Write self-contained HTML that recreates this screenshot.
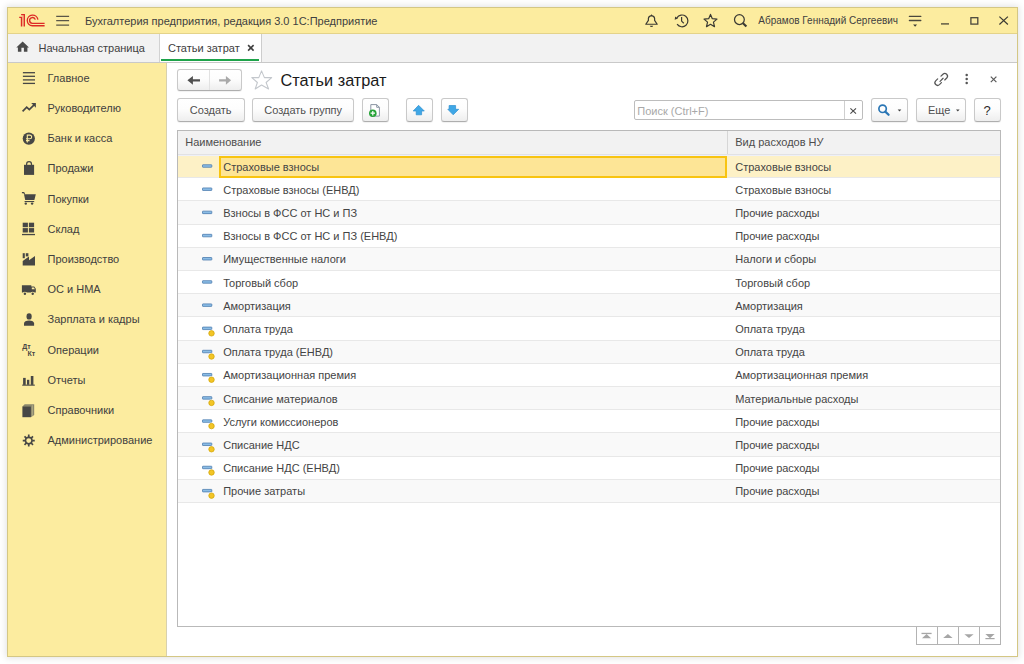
<!DOCTYPE html>
<html><head><meta charset="utf-8">
<style>
*{box-sizing:border-box;margin:0;padding:0}
html,body{width:1024px;height:664px;overflow:hidden;background:#fff;font-family:"Liberation Sans",sans-serif;font-size:11px;color:#404040;position:relative}
.a{position:absolute}
.t{position:absolute;white-space:pre;line-height:1}
.btn{position:absolute;border:1px solid #c9c9c9;border-bottom-color:#aeaeae;border-radius:3px;background:linear-gradient(#ffffff,#fdfdfd 45%,#eeeeee);box-shadow:0 1px 1px rgba(0,0,0,0.06)}
svg{position:absolute;left:0;top:0}
</style></head><body>
<div class="a" style="left:7px;top:7px;width:1011px;height:650px;border:1px solid #d4c784;background:#fff;box-shadow:0 0 7px 1px rgba(0,0,0,0.12)"></div>
<div class="a" style="left:8px;top:8px;width:1009px;height:26px;background:#fcec9f;border-bottom:1px solid #e4d38a"></div>
<div class="t" style="left:85px;top:16.10px;font-size:11px;color:#404040;transform:scaleY(1.05);transform-origin:0 9.30px;">Бухгалтерия предприятия, редакция 3.0 1С:Предприятие</div>
<div class="t" style="left:758.3px;top:16.04px;font-size:10px;color:#404040;transform:scaleY(1.05);transform-origin:0 8.46px;">Абрамов Геннадий Сергеевич</div>
<div class="a" style="left:8px;top:34px;width:1009px;height:29px;background:#f2f2f2;border-bottom:1px solid #c9c9c9"></div>
<div class="a" style="left:159px;top:34px;width:1px;height:28px;background:#d2d2d2"></div>
<div class="a" style="left:160px;top:34px;width:102px;height:28px;background:#fff;border-right:1px solid #cdcdcd"></div>
<div class="a" style="left:161px;top:59px;width:98px;height:2px;background:#1ea34a"></div>
<div class="t" style="left:38.5px;top:42.70px;font-size:11px;color:#404040;transform:scaleY(1.05);transform-origin:0 9.30px;">Начальная страница</div>
<div class="t" style="left:168px;top:42.70px;font-size:11px;color:#404040;transform:scaleY(1.05);transform-origin:0 9.30px;">Статьи затрат</div>
<div class="a" style="left:8px;top:63px;width:159px;height:593px;background:#fcec9f;border-right:1px solid #d8d1ae"></div>
<div class="t" style="left:47.5px;top:72.80px;font-size:11px;color:#404040;transform:scaleY(1.05);transform-origin:0 9.30px;">Главное</div>
<div class="t" style="left:47.5px;top:103.00px;font-size:11px;color:#404040;transform:scaleY(1.05);transform-origin:0 9.30px;">Руководителю</div>
<div class="t" style="left:47.5px;top:133.20px;font-size:11px;color:#404040;transform:scaleY(1.05);transform-origin:0 9.30px;">Банк и касса</div>
<div class="t" style="left:47.5px;top:163.40px;font-size:11px;color:#404040;transform:scaleY(1.05);transform-origin:0 9.30px;">Продажи</div>
<div class="t" style="left:47.5px;top:193.60px;font-size:11px;color:#404040;transform:scaleY(1.05);transform-origin:0 9.30px;">Покупки</div>
<div class="t" style="left:47.5px;top:223.80px;font-size:11px;color:#404040;transform:scaleY(1.05);transform-origin:0 9.30px;">Склад</div>
<div class="t" style="left:47.5px;top:254.00px;font-size:11px;color:#404040;transform:scaleY(1.05);transform-origin:0 9.30px;">Производство</div>
<div class="t" style="left:47.5px;top:284.20px;font-size:11px;color:#404040;transform:scaleY(1.05);transform-origin:0 9.30px;">ОС и НМА</div>
<div class="t" style="left:47.5px;top:314.40px;font-size:11px;color:#404040;transform:scaleY(1.05);transform-origin:0 9.30px;">Зарплата и кадры</div>
<div class="t" style="left:47.5px;top:344.60px;font-size:11px;color:#404040;transform:scaleY(1.05);transform-origin:0 9.30px;">Операции</div>
<div class="t" style="left:47.5px;top:374.80px;font-size:11px;color:#404040;transform:scaleY(1.05);transform-origin:0 9.30px;">Отчеты</div>
<div class="t" style="left:47.5px;top:405.00px;font-size:11px;color:#404040;transform:scaleY(1.05);transform-origin:0 9.30px;">Справочники</div>
<div class="t" style="left:47.5px;top:435.20px;font-size:11px;color:#404040;transform:scaleY(1.05);transform-origin:0 9.30px;">Администрирование</div>
<div class="btn" style="left:177px;top:69px;width:65px;height:22px"></div>
<div class="a" style="left:209px;top:70px;width:1px;height:20px;background:#e2e2e2"></div>
<div class="t" style="left:280.4px;top:72.31px;font-size:16.3px;color:#1a1a1a;">Статьи затрат</div>
<div class="btn" style="left:177px;top:98px;width:68px;height:24px"></div>
<div class="t" style="left:189.8px;top:105.20px;font-size:11px;color:#505050;transform:scaleY(1.05);transform-origin:0 9.30px;">Создать</div>
<div class="btn" style="left:252px;top:98px;width:102px;height:24px"></div>
<div class="t" style="left:264.3px;top:105.20px;font-size:11px;color:#505050;transform:scaleY(1.05);transform-origin:0 9.30px;">Создать группу</div>
<div class="btn" style="left:362px;top:98px;width:27px;height:24px"></div>
<div class="btn" style="left:406px;top:98px;width:27px;height:24px"></div>
<div class="btn" style="left:441px;top:98px;width:27px;height:24px"></div>
<div class="a" style="left:634px;top:100px;width:229px;height:20px;border:1px solid #bdbdbd;border-radius:2px;background:#fff"></div>
<div class="a" style="left:844px;top:101px;width:1px;height:18px;background:#cfcfcf"></div>
<div class="t" style="left:637.3px;top:105.90px;font-size:11px;color:#a8a8a8;transform:scaleY(1.05);transform-origin:0 9.30px;">Поиск (Ctrl+F)</div>
<div class="btn" style="left:871px;top:98px;width:37px;height:24px"></div>
<div class="btn" style="left:916px;top:98px;width:50px;height:24px"></div>
<div class="t" style="left:928px;top:105.20px;font-size:11px;color:#505050;transform:scaleY(1.05);transform-origin:0 9.30px;">Еще</div>
<div class="btn" style="left:974px;top:98px;width:27px;height:24px"></div>
<div class="t" style="left:983.6px;top:104.00px;font-size:13px;color:#2a2a2a;">?</div>
<div class="a" style="left:177px;top:130px;width:824px;height:497px;border:1px solid #b9b9b9;background:#fff"></div>
<div class="a" style="left:178px;top:131px;width:822px;height:24px;background:#f2f2f2;border-bottom:1px solid #e2e2e4"></div>
<div class="a" style="left:178px;top:155px;width:822px;height:1px;background:#eef0f8"></div>
<div class="a" style="left:727px;top:131px;width:1px;height:23px;background:#d6d6d6"></div>
<div class="t" style="left:185.2px;top:137.00px;font-size:11px;color:#4d4d4d;transform:scaleY(1.05);transform-origin:0 9.30px;">Наименование</div>
<div class="t" style="left:735.2px;top:137.00px;font-size:11px;color:#4d4d4d;transform:scaleY(1.05);transform-origin:0 9.30px;">Вид расходов НУ</div>
<div class="a" style="left:178px;top:156px;width:822px;height:21px;background:#fdf1c6"></div>
<div class="a" style="left:178px;top:177px;width:822px;height:1px;background:#e8e8e8"></div>
<div class="a" style="left:219px;top:156px;width:508px;height:22px;border:2px solid #f8c411;background:#fde596"></div>
<div class="t" style="left:223.2px;top:161.60px;font-size:11px;color:#444;transform:scaleY(1.05);transform-origin:0 9.30px;">Страховые взносы</div>
<div class="t" style="left:735.2px;top:161.60px;font-size:11px;color:#444;transform:scaleY(1.05);transform-origin:0 9.30px;">Страховые взносы</div>
<div class="a" style="left:178px;top:178px;width:822px;height:22px;background:#fff"></div>
<div class="a" style="left:178px;top:200px;width:822px;height:1px;background:#e8e8e8"></div>
<div class="t" style="left:223.2px;top:184.79px;font-size:11px;color:#444;transform:scaleY(1.05);transform-origin:0 9.30px;">Страховые взносы (ЕНВД)</div>
<div class="t" style="left:735.2px;top:184.79px;font-size:11px;color:#444;transform:scaleY(1.05);transform-origin:0 9.30px;">Страховые взносы</div>
<div class="a" style="left:178px;top:201px;width:822px;height:23px;background:#f9f9f9"></div>
<div class="a" style="left:178px;top:224px;width:822px;height:1px;background:#e8e8e8"></div>
<div class="t" style="left:223.2px;top:207.98px;font-size:11px;color:#444;transform:scaleY(1.05);transform-origin:0 9.30px;">Взносы в ФСС от НС и ПЗ</div>
<div class="t" style="left:735.2px;top:207.98px;font-size:11px;color:#444;transform:scaleY(1.05);transform-origin:0 9.30px;">Прочие расходы</div>
<div class="a" style="left:178px;top:225px;width:822px;height:22px;background:#fff"></div>
<div class="a" style="left:178px;top:247px;width:822px;height:1px;background:#e8e8e8"></div>
<div class="t" style="left:223.2px;top:231.17px;font-size:11px;color:#444;transform:scaleY(1.05);transform-origin:0 9.30px;">Взносы в ФСС от НС и ПЗ (ЕНВД)</div>
<div class="t" style="left:735.2px;top:231.17px;font-size:11px;color:#444;transform:scaleY(1.05);transform-origin:0 9.30px;">Прочие расходы</div>
<div class="a" style="left:178px;top:248px;width:822px;height:22px;background:#f9f9f9"></div>
<div class="a" style="left:178px;top:270px;width:822px;height:1px;background:#e8e8e8"></div>
<div class="t" style="left:223.2px;top:254.36px;font-size:11px;color:#444;transform:scaleY(1.05);transform-origin:0 9.30px;">Имущественные налоги</div>
<div class="t" style="left:735.2px;top:254.36px;font-size:11px;color:#444;transform:scaleY(1.05);transform-origin:0 9.30px;">Налоги и сборы</div>
<div class="a" style="left:178px;top:271px;width:822px;height:22px;background:#fff"></div>
<div class="a" style="left:178px;top:293px;width:822px;height:1px;background:#e8e8e8"></div>
<div class="t" style="left:223.2px;top:277.55px;font-size:11px;color:#444;transform:scaleY(1.05);transform-origin:0 9.30px;">Торговый сбор</div>
<div class="t" style="left:735.2px;top:277.55px;font-size:11px;color:#444;transform:scaleY(1.05);transform-origin:0 9.30px;">Торговый сбор</div>
<div class="a" style="left:178px;top:294px;width:822px;height:22px;background:#f9f9f9"></div>
<div class="a" style="left:178px;top:316px;width:822px;height:1px;background:#e8e8e8"></div>
<div class="t" style="left:223.2px;top:300.74px;font-size:11px;color:#444;transform:scaleY(1.05);transform-origin:0 9.30px;">Амортизация</div>
<div class="t" style="left:735.2px;top:300.74px;font-size:11px;color:#444;transform:scaleY(1.05);transform-origin:0 9.30px;">Амортизация</div>
<div class="a" style="left:178px;top:317px;width:822px;height:23px;background:#fff"></div>
<div class="a" style="left:178px;top:340px;width:822px;height:1px;background:#e8e8e8"></div>
<div class="t" style="left:223.2px;top:323.93px;font-size:11px;color:#444;transform:scaleY(1.05);transform-origin:0 9.30px;">Оплата труда</div>
<div class="t" style="left:735.2px;top:323.93px;font-size:11px;color:#444;transform:scaleY(1.05);transform-origin:0 9.30px;">Оплата труда</div>
<div class="a" style="left:178px;top:341px;width:822px;height:22px;background:#f9f9f9"></div>
<div class="a" style="left:178px;top:363px;width:822px;height:1px;background:#e8e8e8"></div>
<div class="t" style="left:223.2px;top:347.12px;font-size:11px;color:#444;transform:scaleY(1.05);transform-origin:0 9.30px;">Оплата труда (ЕНВД)</div>
<div class="t" style="left:735.2px;top:347.12px;font-size:11px;color:#444;transform:scaleY(1.05);transform-origin:0 9.30px;">Оплата труда</div>
<div class="a" style="left:178px;top:364px;width:822px;height:22px;background:#fff"></div>
<div class="a" style="left:178px;top:386px;width:822px;height:1px;background:#e8e8e8"></div>
<div class="t" style="left:223.2px;top:370.31px;font-size:11px;color:#444;transform:scaleY(1.05);transform-origin:0 9.30px;">Амортизационная премия</div>
<div class="t" style="left:735.2px;top:370.31px;font-size:11px;color:#444;transform:scaleY(1.05);transform-origin:0 9.30px;">Амортизационная премия</div>
<div class="a" style="left:178px;top:387px;width:822px;height:22px;background:#f9f9f9"></div>
<div class="a" style="left:178px;top:409px;width:822px;height:1px;background:#e8e8e8"></div>
<div class="t" style="left:223.2px;top:393.50px;font-size:11px;color:#444;transform:scaleY(1.05);transform-origin:0 9.30px;">Списание материалов</div>
<div class="t" style="left:735.2px;top:393.50px;font-size:11px;color:#444;transform:scaleY(1.05);transform-origin:0 9.30px;">Материальные расходы</div>
<div class="a" style="left:178px;top:410px;width:822px;height:22px;background:#fff"></div>
<div class="a" style="left:178px;top:432px;width:822px;height:1px;background:#e8e8e8"></div>
<div class="t" style="left:223.2px;top:416.69px;font-size:11px;color:#444;transform:scaleY(1.05);transform-origin:0 9.30px;">Услуги комиссионеров</div>
<div class="t" style="left:735.2px;top:416.69px;font-size:11px;color:#444;transform:scaleY(1.05);transform-origin:0 9.30px;">Прочие расходы</div>
<div class="a" style="left:178px;top:433px;width:822px;height:23px;background:#f9f9f9"></div>
<div class="a" style="left:178px;top:456px;width:822px;height:1px;background:#e8e8e8"></div>
<div class="t" style="left:223.2px;top:439.88px;font-size:11px;color:#444;transform:scaleY(1.05);transform-origin:0 9.30px;">Списание НДС</div>
<div class="t" style="left:735.2px;top:439.88px;font-size:11px;color:#444;transform:scaleY(1.05);transform-origin:0 9.30px;">Прочие расходы</div>
<div class="a" style="left:178px;top:457px;width:822px;height:22px;background:#fff"></div>
<div class="a" style="left:178px;top:479px;width:822px;height:1px;background:#e8e8e8"></div>
<div class="t" style="left:223.2px;top:463.07px;font-size:11px;color:#444;transform:scaleY(1.05);transform-origin:0 9.30px;">Списание НДС (ЕНВД)</div>
<div class="t" style="left:735.2px;top:463.07px;font-size:11px;color:#444;transform:scaleY(1.05);transform-origin:0 9.30px;">Прочие расходы</div>
<div class="a" style="left:178px;top:480px;width:822px;height:22px;background:#f9f9f9"></div>
<div class="a" style="left:178px;top:502px;width:822px;height:1px;background:#e8e8e8"></div>
<div class="t" style="left:223.2px;top:486.26px;font-size:11px;color:#444;transform:scaleY(1.05);transform-origin:0 9.30px;">Прочие затраты</div>
<div class="t" style="left:735.2px;top:486.26px;font-size:11px;color:#444;transform:scaleY(1.05);transform-origin:0 9.30px;">Прочие расходы</div>
<div class="a" style="left:916px;top:627px;width:85px;height:18px;border:1px solid #b3b3b3;border-top:none;background:#fff"></div>
<div class="a" style="left:937px;top:627px;width:1px;height:17px;background:#b3b3b3"></div>
<div class="a" style="left:958px;top:627px;width:1px;height:17px;background:#b3b3b3"></div>
<div class="a" style="left:979px;top:627px;width:1px;height:17px;background:#b3b3b3"></div>
<svg width="1024" height="664" viewBox="0 0 1024 664">
<rect x="22.1" y="15.2" width="1.6" height="11.2" fill="#f0a07a" opacity="0.55"/>
<g fill="none" stroke="#dd2a26" stroke-width="1.35"><path d="M19.2 17.4H21.5V26.4M21.1 14.6H24.3V26.4"/><path d="M37.9 19.6A5.35 5.35 0 1 0 32.4 25.75H44.6"/><path d="M35.3 19.6A2.9 2.9 0 1 0 32.4 23.3H44.6"/></g>
<g stroke="#5a5648" stroke-width="1.3"><path d="M56.2 16.4H69.1M56.2 20.7H69.1M56.2 25.1H69.1"/></g>
<g fill="none" stroke="#3b3a33" stroke-width="1.2" stroke-linejoin="round"><path d="M645.8 24.25L648.4 20.3V18.3Q648.7 16.2 651.5 15.7Q654.3 16.2 654.6 18.3V20.3L657.2 24.25Z"/></g><path d="M650.6 15.9L651.5 14L652.4 15.9Z" fill="#3b3a33"/><path d="M649.8 25.7H653.2Q652.9 27.1 651.5 27.1Q650.1 27.1 649.8 25.7Z" fill="#3b3a33"/>
<g fill="none" stroke="#3b3a33" stroke-width="1.2"><path d="M676.9 17.9A5.9 5.9 0 1 1 677.1 24.2"/><path d="M681.6 17.1V21.1L683.8 23.2"/></g><path d="M674.7 19.7L675.2 16.6L678 18.4Z" fill="#3b3a33"/>
<polygon points="710.50,14.40 712.32,18.69 716.97,19.10 713.45,22.16 714.50,26.70 710.50,24.30 706.50,26.70 707.55,22.16 704.03,19.10 708.68,18.69" fill="none" stroke="#3b3a33" stroke-width="1.2" stroke-linejoin="round"/>
<circle cx="739.4" cy="19.6" r="4.9" fill="none" stroke="#3b3a33" stroke-width="1.25"/><path d="M743 23.2L746.4 26.6" stroke="#3b3a33" stroke-width="2.1"/>
<g stroke="#4a473c" stroke-width="1.3" stroke-linecap="round"><path d="M909.4 16.4H920.8M909.4 20.5H920.8"/></g><path d="M913.1 24.6H917.1L915.1 26.8Z" fill="#3b3a33"/>
<path d="M941 23.9H949" stroke="#55523f" stroke-width="1.4"/><rect x="970.9" y="17.7" width="6.9" height="6.4" fill="none" stroke="#4a473c" stroke-width="1.3"/><path d="M999.4 16.6L1007.9 24.5M1007.9 16.6L999.4 24.5" stroke="#3b3a33" stroke-width="1.2"/>
<path d="M16.3 47.5L22.65 41.6L29 47.5H27.4V51.8H23.9V47.8H21.4V51.8H17.9V47.5Z" fill="#4a4a4a"/>
<path d="M248.1 45.1L253.6 50.6M253.6 45.1L248.1 50.6" stroke="#404040" stroke-width="1.6"/>
<path d="M187.4 80.3L192.9 76V79.2H200V81.5H192.9V84.7Z" fill="#505050"/>
<path d="M231.1 80.3L225.9 76V79.2H219.1V81.5H225.9V84.7Z" fill="#a9a9a9"/>
<polygon points="261.55,70.9 264.4,77.6 271.7,77.6 266.1,82.5 268.6,89 261.55,85 255.2,89 257.4,82.5 251.8,77.6 258.8,77.6" fill="none" stroke="#c3c7cc" stroke-width="1.05" stroke-linejoin="round"/>
<g fill="none" stroke="#555" stroke-width="1.35" stroke-linecap="round" transform="translate(941.2 79.4) scale(0.92) translate(-940.55 -79.0)"><path d="M936.7 78.4L934.55 80.55A2.9 2.9 0 0 0 938.65 84.65L940.8 82.5"/><path d="M940.3 75.5L942.45 73.35A2.9 2.9 0 0 1 946.55 77.45L944.4 79.6"/><path d="M939.3 81.1L942.6 77.8"/></g>
<g fill="#555"><circle cx="966.7" cy="75.1" r="1.25"/><circle cx="966.7" cy="79.0" r="1.25"/><circle cx="966.7" cy="82.9" r="1.25"/></g>
<path d="M990.8 76.6L996.4 82.2M996.4 76.6L990.8 82.2" stroke="#5a5a5a" stroke-width="1.2"/>
<path d="M370.8 104.6H376.7L379.4 107.3V116.1H370.8Z" fill="#fff" stroke="#8a94a3" stroke-width="1"/><path d="M376.7 104.6V107.3H379.4" fill="none" stroke="#8a94a3" stroke-width="1"/><circle cx="372.8" cy="113.2" r="3.8" fill="#27a338"/><path d="M370.6 113.2H375M372.8 111V115.4" stroke="#fff" stroke-width="1.2"/>
<path d="M418.6 105.3L424.3 111H421.6V114.8H416.2V111H413.2Z" fill="#3fa7e6" stroke="#2e8fd0" stroke-width="0.7" stroke-linejoin="round"/>
<path d="M453.2 114.8L458.7 109.3H455.6V105.5H449.1V109.3H447.8Z" fill="#3fa7e6" stroke="#2e8fd0" stroke-width="0.7" stroke-linejoin="round"/>
<path d="M850.4 108.4L856 113.7M856 108.4L850.4 113.7" stroke="#4a4a4a" stroke-width="1.1"/>
<circle cx="882.6" cy="108.8" r="3.7" fill="none" stroke="#2a76b5" stroke-width="1.7"/><path d="M885.3 111.6L888.6 114.8" stroke="#2a76b5" stroke-width="2.2" stroke-linecap="round"/>
<path d="M897.7 109.6H901.3L899.5 111.6Z" fill="#404040"/><path d="M956 109.6H959.6L957.8 111.6Z" fill="#404040"/>
<rect x="202.5" y="164.75" width="9.3" height="2.5" rx="0.4" fill="#8bbde6" stroke="#4677ab" stroke-width="0.75"/>
<rect x="202.5" y="187.94" width="9.3" height="2.5" rx="0.4" fill="#8bbde6" stroke="#4677ab" stroke-width="0.75"/>
<rect x="202.5" y="211.13" width="9.3" height="2.5" rx="0.4" fill="#8bbde6" stroke="#4677ab" stroke-width="0.75"/>
<rect x="202.5" y="234.32" width="9.3" height="2.5" rx="0.4" fill="#8bbde6" stroke="#4677ab" stroke-width="0.75"/>
<rect x="202.5" y="257.51" width="9.3" height="2.5" rx="0.4" fill="#8bbde6" stroke="#4677ab" stroke-width="0.75"/>
<rect x="202.5" y="280.70" width="9.3" height="2.5" rx="0.4" fill="#8bbde6" stroke="#4677ab" stroke-width="0.75"/>
<rect x="202.5" y="303.89" width="9.3" height="2.5" rx="0.4" fill="#8bbde6" stroke="#4677ab" stroke-width="0.75"/>
<rect x="202.5" y="327.08" width="9.3" height="2.5" rx="0.4" fill="#8bbde6" stroke="#4677ab" stroke-width="0.75"/>
<circle cx="211.5" cy="333.33" r="3.5" fill="#fff" opacity="0.8"/><circle cx="211.5" cy="333.33" r="2.75" fill="#f3c526" stroke="#cfa000" stroke-width="0.7"/>
<rect x="202.5" y="350.27" width="9.3" height="2.5" rx="0.4" fill="#8bbde6" stroke="#4677ab" stroke-width="0.75"/>
<circle cx="211.5" cy="356.52" r="3.5" fill="#fff" opacity="0.8"/><circle cx="211.5" cy="356.52" r="2.75" fill="#f3c526" stroke="#cfa000" stroke-width="0.7"/>
<rect x="202.5" y="373.46" width="9.3" height="2.5" rx="0.4" fill="#8bbde6" stroke="#4677ab" stroke-width="0.75"/>
<circle cx="211.5" cy="379.71" r="3.5" fill="#fff" opacity="0.8"/><circle cx="211.5" cy="379.71" r="2.75" fill="#f3c526" stroke="#cfa000" stroke-width="0.7"/>
<rect x="202.5" y="396.65" width="9.3" height="2.5" rx="0.4" fill="#8bbde6" stroke="#4677ab" stroke-width="0.75"/>
<circle cx="211.5" cy="402.90" r="3.5" fill="#fff" opacity="0.8"/><circle cx="211.5" cy="402.90" r="2.75" fill="#f3c526" stroke="#cfa000" stroke-width="0.7"/>
<rect x="202.5" y="419.84" width="9.3" height="2.5" rx="0.4" fill="#8bbde6" stroke="#4677ab" stroke-width="0.75"/>
<circle cx="211.5" cy="426.09" r="3.5" fill="#fff" opacity="0.8"/><circle cx="211.5" cy="426.09" r="2.75" fill="#f3c526" stroke="#cfa000" stroke-width="0.7"/>
<rect x="202.5" y="443.03" width="9.3" height="2.5" rx="0.4" fill="#8bbde6" stroke="#4677ab" stroke-width="0.75"/>
<circle cx="211.5" cy="449.28" r="3.5" fill="#fff" opacity="0.8"/><circle cx="211.5" cy="449.28" r="2.75" fill="#f3c526" stroke="#cfa000" stroke-width="0.7"/>
<rect x="202.5" y="466.22" width="9.3" height="2.5" rx="0.4" fill="#8bbde6" stroke="#4677ab" stroke-width="0.75"/>
<circle cx="211.5" cy="472.47" r="3.5" fill="#fff" opacity="0.8"/><circle cx="211.5" cy="472.47" r="2.75" fill="#f3c526" stroke="#cfa000" stroke-width="0.7"/>
<rect x="202.5" y="489.41" width="9.3" height="2.5" rx="0.4" fill="#8bbde6" stroke="#4677ab" stroke-width="0.75"/>
<circle cx="211.5" cy="495.66" r="3.5" fill="#fff" opacity="0.8"/><circle cx="211.5" cy="495.66" r="2.75" fill="#f3c526" stroke="#cfa000" stroke-width="0.7"/>
<g fill="#a6a6a6"><path d="M922 638.3H931.1L926.55 634Z"/><rect x="921.5" y="632.8" width="10.1" height="1.3"/><path d="M943.2 638H952.6L947.9 634.1Z"/><path d="M964.4 634.2H973.6L969 638.1Z"/><path d="M985.4 634H994.6L990 638.2Z"/><rect x="985.4" y="638" width="9.2" height="1.2"/></g>
</svg><svg width="1024" height="664" viewBox="0 0 1024 664"><g fill="#474745"><rect x="22.9" y="72.05" width="12.1" height="1.3"/><rect x="22.9" y="75.65" width="12.1" height="1.3"/><rect x="22.9" y="79.25" width="12.1" height="1.3"/><rect x="22.9" y="82.75" width="12.1" height="1.3"/></g><path d="M22.6 111.3L26.7 107.1L29.3 109.6L34.6 104.3" fill="none" stroke="#474745" stroke-width="1.7"/><path d="M31.2 103.1H35.9V107.8Z" fill="#474745"/><g fill="#474745"><circle cx="28.8" cy="138.6" r="6.1"/></g><path d="M27.3 142.6V135.1H29.8A1.85 1.85 0 0 1 29.8 138.8H26M26 140.6H29.5" fill="none" stroke="#fcec9f" stroke-width="1.1"/><g fill="#474745"><rect x="24" y="164.8" width="10.1" height="10.1"/></g><path d="M26.6 166.5V164.2A2.45 2.5 0 0 1 31.5 164.2V166.5" fill="none" stroke="#474745" stroke-width="1.2"/><g fill="#474745"></g><path d="M21.9 192.6H23.8L24.6 194.3" fill="none" stroke="#474745" stroke-width="1.1"/><g fill="#474745"><path d="M24 194.3H35.8L34.4 200H25.2Z"/><rect x="24.6" y="201" width="9.6" height="1.1"/><circle cx="25.8" cy="203.6" r="1.2"/><circle cx="32.1" cy="203.6" r="1.2"/><rect x="22.7" y="222.7" width="5.2" height="4.5"/><rect x="28.9" y="222.7" width="5.2" height="4.5"/><rect x="22.7" y="228.1" width="5.2" height="4.4"/><rect x="28.9" y="228.1" width="5.2" height="4.4"/><rect x="22" y="233.9" width="13" height="1.3"/><path d="M22.7 265.4V260.9L29 256.5V260.2L35 256V265.4Z"/><rect x="22.7" y="253.2" width="2.1" height="5"/><rect x="25.8" y="253.2" width="2.6" height="3.2"/><path d="M21.9 285.3H31.3V286.6H34.2L35.8 288.8V292.6H21.9Z"/></g><circle cx="24.9" cy="293.8" r="2.1" fill="#fcec9f"/><circle cx="32.7" cy="293.8" r="2.1" fill="#fcec9f"/><path d="M31.8 287.4H33.9L34.9 289.3H31.8Z" fill="#fcec9f"/><g fill="#474745"><circle cx="24.9" cy="293.8" r="1.2"/><circle cx="32.7" cy="293.8" r="1.2"/><ellipse cx="29.1" cy="316.4" rx="2.6" ry="3.2"/><path d="M24 325.8V323.6C24 321.6 26.2 320.6 29.1 320.6C32 320.6 34.1 321.6 34.1 323.6V325.8Z"/></g><text x="22.2" y="349.2" font-family="Liberation Sans" font-weight="bold" font-size="7" fill="#474745">Дт</text><text x="27.6" y="356" font-family="Liberation Sans" font-weight="bold" font-size="7" fill="#474745">Кт</text><g fill="#474745"><rect x="23.1" y="377.9" width="2.6" height="7"/><rect x="27.0" y="379.8" width="2.3" height="5"/><rect x="30.8" y="376.0" width="2.6" height="8.9"/><rect x="22.2" y="384.6" width="12.6" height="1.1"/><path d="M22.4 406.6L24.7 404.3H34.2V414.9L30.9 417.2Z" fill="#8a876c"/><path d="M32.3 405.2V415.8" stroke="#cfc69a" stroke-width="0.6"/><rect x="22.4" y="406.6" width="8.5" height="10.6"/></g><circle cx="28.75" cy="440.6" r="3.25" fill="none" stroke="#474745" stroke-width="1.55"/><path d="M32.15 440.60L34.75 440.60M31.15 443.00L32.99 444.84M28.75 444.00L28.75 446.60M26.35 443.00L24.51 444.84M25.35 440.60L22.75 440.60M26.35 438.20L24.51 436.36M28.75 437.20L28.75 434.60M31.15 438.20L32.99 436.36" stroke="#474745" stroke-width="1.7"/></svg></body></html>
